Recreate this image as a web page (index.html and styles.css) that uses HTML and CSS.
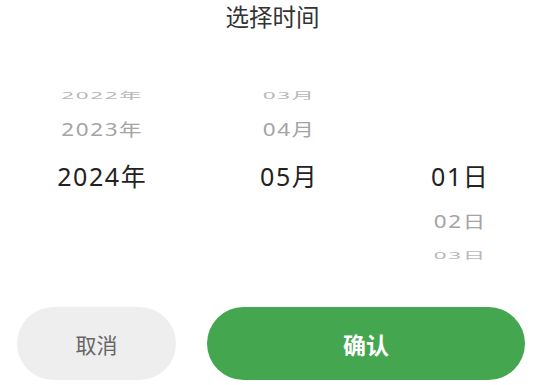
FILE: index.html
```html
<!DOCTYPE html>
<html lang="zh-CN">
<head>
<meta charset="utf-8">
<title>选择时间</title>
<link rel="stylesheet" href="styles.css">
</head>
<body>
<div class="sheet">
  <div class="title">选择时间</div>
  <div class="picker">
    <div class="col">
      <div class="row far">2022年</div>
      <div class="row near">2023年</div>
      <div class="row sel">2024年</div>
      <div class="row near"></div>
      <div class="row far"></div>
    </div>
    <div class="col">
      <div class="row far">03月</div>
      <div class="row near">04月</div>
      <div class="row sel">05月</div>
      <div class="row near"></div>
      <div class="row far"></div>
    </div>
    <div class="col">
      <div class="row far"></div>
      <div class="row near"></div>
      <div class="row sel">01日</div>
      <div class="row near">02日</div>
      <div class="row far">03日</div>
    </div>
  </div>
  <div class="actions">
    <button class="btn cancel">取消</button>
    <button class="btn confirm">确认</button>
  </div>
</div>
</body>
</html>
```

FILE: styles.css
```css
html, body {
  margin: 0;
  padding: 0;
  background: #ffffff;
}
body {
  font-family: "Noto Sans", "Noto Sans CJK SC", sans-serif;
  color: #222;
}
.sheet {
  width: 545px;
  height: 385px;
  overflow: hidden;
}
.title {
  height: 34px;
  line-height: 34px;
  text-align: center;
  font-size: 23.5px;
  color: #333;
}
.picker {
  margin-top: 49px;
  display: flex;
  justify-content: space-around;
}
.col {
  display: flex;
  flex-direction: column;
  align-items: center;
}
.row {
  display: flex;
  align-items: center;
  justify-content: center;
  line-height: 1;
  white-space: nowrap;
  letter-spacing: 1.6px;
  padding-left: 1.6px;
}
.row.sel {
  height: 50px;
  font-size: 25px;
  color: #222;
}
.row.near {
  height: 42px;
  font-size: 22.5px;
  color: #a4a4a4;
  transform: scaleY(0.78);
}
.row.far {
  height: 26px;
  font-size: 22.5px;
  color: #b8b8b8;
  transform: scaleY(0.42);
}
.actions {
  margin-top: 38px;
  display: flex;
  gap: 31px;
  padding: 0 20px 0 17px;
}
.btn {
  height: 73px;
  border: none;
  border-radius: 37px;
  font-family: "Noto Sans", "Noto Sans CJK SC", sans-serif;
  padding: 0;
}
.cancel {
  flex: 1;
  background: #eeeeee;
  color: #666;
  font-size: 21px;
}
.confirm {
  flex: 2;
  background: #44a64f;
  color: #ffffff;
  font-size: 23px;
  font-weight: 700;
}
```
